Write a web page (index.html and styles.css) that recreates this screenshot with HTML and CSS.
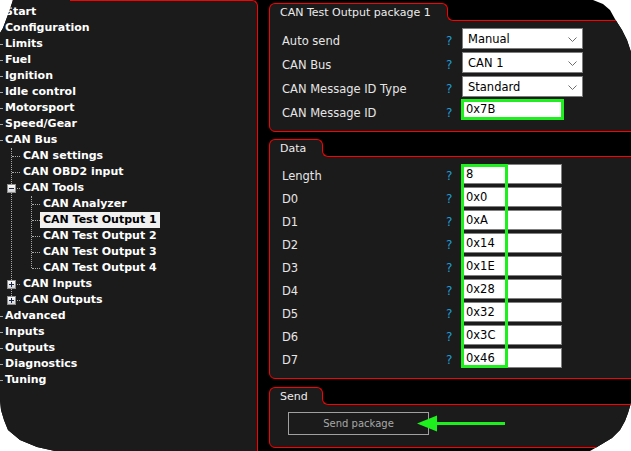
FILE: index.html
```html
<!DOCTYPE html>
<html>
<head>
<meta charset="utf-8">
<link rel="stylesheet" href="styles.css">
</head>
<body>
<div class="screen">
  <nav class="tree">
    <div class="row l0"><span class="t">Start</span></div>
    <div class="row l0"><span class="t">Configuration</span></div>
    <div class="row l0"><span class="t">Limits</span></div>
    <div class="row l0"><span class="t">Fuel</span></div>
    <div class="row l0"><span class="t">Ignition</span></div>
    <div class="row l0"><span class="t">Idle control</span></div>
    <div class="row l0"><span class="t">Motorsport</span></div>
    <div class="row l0"><span class="t">Speed/Gear</span></div>
    <div class="row l0"><span class="t">CAN Bus</span></div>
    <div class="sub s1">
      <div class="row l1"><span class="t">CAN settings</span></div>
      <div class="row l1"><span class="t">CAN OBD2 input</span></div>
      <div class="row l1"><span class="exp minus"></span><span class="t">CAN Tools</span></div>
      <div class="sub s2">
        <div class="row l2"><span class="t">CAN Analyzer</span></div>
        <div class="row l2"><span class="t sel">CAN Test Output 1</span></div>
        <div class="row l2"><span class="t">CAN Test Output 2</span></div>
        <div class="row l2"><span class="t">CAN Test Output 3</span></div>
        <div class="row l2"><span class="t">CAN Test Output 4</span></div>
      </div>
      <div class="row l1"><span class="exp plus"></span><span class="t">CAN Inputs</span></div>
      <div class="row l1"><span class="exp plus"></span><span class="t">CAN Outputs</span></div>
    </div>
    <div class="row l0"><span class="t">Advanced</span></div>
    <div class="row l0"><span class="t">Inputs</span></div>
    <div class="row l0"><span class="t">Outputs</span></div>
    <div class="row l0"><span class="t">Diagnostics</span></div>
    <div class="row l0"><span class="t">Tuning</span></div>
  </nav>

  <main class="content">
    <section class="group g1">
      <div class="tab tab-wide">CAN Test Output package 1</div>
      <div class="panel panel1">
        <div class="field"><span class="lbl">Auto send</span><span class="q">?</span>
          <div class="select"><span>Manual</span><svg class="chev" width="9" height="5" viewBox="0 0 9 5"><polyline points="0.5,0.5 4.5,4.5 8.5,0.5" fill="none" stroke="#6e6e6e" stroke-width="1"/></svg></div></div>
        <div class="field"><span class="lbl">CAN Bus</span><span class="q">?</span>
          <div class="select"><span>CAN 1</span><svg class="chev" width="9" height="5" viewBox="0 0 9 5"><polyline points="0.5,0.5 4.5,4.5 8.5,0.5" fill="none" stroke="#6e6e6e" stroke-width="1"/></svg></div></div>
        <div class="field"><span class="lbl">CAN Message ID Type</span><span class="q">?</span>
          <div class="select"><span>Standard</span><svg class="chev" width="9" height="5" viewBox="0 0 9 5"><polyline points="0.5,0.5 4.5,4.5 8.5,0.5" fill="none" stroke="#6e6e6e" stroke-width="1"/></svg></div></div>
        <div class="field"><span class="lbl">CAN Message ID</span><span class="q">?</span>
          <div class="inp hl">0x7B</div></div>
      </div>
    </section>

    <section class="group g2">
      <div class="tab tab-narrow">Data</div>
      <div class="panel panel2">
        <div class="field df"><span class="lbl">Length</span><span class="q">?</span><div class="inp">8</div></div>
        <div class="field df"><span class="lbl">D0</span><span class="q">?</span><div class="inp">0x0</div></div>
        <div class="field df"><span class="lbl">D1</span><span class="q">?</span><div class="inp">0xA</div></div>
        <div class="field df"><span class="lbl">D2</span><span class="q">?</span><div class="inp">0x14</div></div>
        <div class="field df"><span class="lbl">D3</span><span class="q">?</span><div class="inp">0x1E</div></div>
        <div class="field df"><span class="lbl">D4</span><span class="q">?</span><div class="inp">0x28</div></div>
        <div class="field df"><span class="lbl">D5</span><span class="q">?</span><div class="inp">0x32</div></div>
        <div class="field df"><span class="lbl">D6</span><span class="q">?</span><div class="inp">0x3C</div></div>
        <div class="field df"><span class="lbl">D7</span><span class="q">?</span><div class="inp">0x46</div></div>
        <div class="mark"></div>
      </div>
    </section>

    <section class="group g3">
      <div class="tab tab-narrow">Send</div>
      <div class="panel panel3">
        <button class="btn">Send package</button>
        <svg class="arrow" width="92" height="18" viewBox="0 0 92 18">
          <polygon points="1,8.5 21,0.5 21,16.5" fill="#1ef01e"/>
          <rect x="20" y="7" width="69" height="3" fill="#1ef01e"/>
        </svg>
      </div>
    </section>
  </main>
</div>
</body>
</html>
```

FILE: styles.css
```css
html, body {
  margin: 0;
  padding: 0;
  background: #fff;
}

.screen {
  width: 631px;
  height: 451px;
  overflow: hidden;
  background: #000;
  display: flex;
  align-items: flex-start;
  font-family: "DejaVu Sans", Verdana, sans-serif;
  clip-path: polygon(
    13px 0, 593px 0, 603px 4px, 610px 10px, 615px 19px, 622px 30px, 627px 40px, 631px 52px,
    631px 403px, 628px 413px, 625px 421px, 620px 430px, 612px 438px, 597px 447px, 590px 451px,
    55px 451px, 37px 447px, 20px 440px, 8px 430px, 4px 420px, 1px 410px, 0 400px,
    0 33px, 3px 28px, 6px 20px, 9px 12px
  );
}

/* ---------- tree ---------- */
.tree {
  position: relative;
  flex: none;
  width: 258px;
  height: 480px;
  box-sizing: border-box;
  background: #1b1b1b;
  border-top: 1px solid #ff0000;
  border-right: 1px solid #ff0000;
  border-top-right-radius: 6px;
  padding-top: 3px;
  color: #fff;
  font-weight: bold;
  font-size: 11px;
}

/* the red top edge only shows from x=70 on */
.tree::before {
  content: "";
  position: absolute;
  left: 0;
  top: -1px;
  width: 70px;
  height: 1px;
  background: #1b1b1b;
}

.row {
  height: 16px;
  display: flex;
  align-items: center;
  position: relative;
  white-space: nowrap;
}

.row::before {
  content: "";
  flex: none;
  height: 0;
  border-top: 1px dotted #a8a8a8;
}

.l0::before { width: 2px; }
.l1 { padding-left: 12px; }
.l1::before { width: 8px; }
.l2 { padding-left: 32px; }
.l2::before { width: 8px; }

.t {
  padding: 0 3px;
  line-height: 16px;
}

.t.sel {
  background: #f0f0f0;
  color: #000;
}

.sub { position: relative; }

.sub::before {
  content: "";
  position: absolute;
  top: 0;
  bottom: 8px;
  border-left: 1px dotted #a8a8a8;
}

.s1::before { left: 11px; }
.s2::before { left: 31px; }

.exp {
  position: absolute;
  left: 7px;
  top: 4px;
  width: 9px;
  height: 9px;
  box-sizing: border-box;
  border: 1px solid #8e8e8e;
  background: linear-gradient(#ffffff, #d4d4d4);
  z-index: 1;
}

.exp::before {
  content: "";
  position: absolute;
  left: 1px;
  top: 3px;
  width: 5px;
  height: 1px;
  background: #1c2a4a;
}

.plus::after {
  content: "";
  position: absolute;
  left: 3px;
  top: 1px;
  width: 1px;
  height: 5px;
  background: #1c2a4a;
}

/* ---------- content ---------- */
.content {
  flex: none;
  width: 420px;
  margin-left: 11px;
  padding-top: 3px;
  display: flex;
  flex-direction: column;
  color: #e8e8e8;
}

.group {
  display: flex;
  flex-direction: column;
  align-items: flex-start;
}

.g2 { margin-top: 7px; }
.g3 { margin-top: 8px; }

.tab {
  position: relative;
  z-index: 1;
  height: 18px;
  box-sizing: border-box;
  border: 1px solid #ff0000;
  border-bottom: 0;
  border-radius: 6px 6px 0 0;
  background: #1b1b1b;
  padding: 0 0 0 10px;
  font-size: 11px;
  line-height: 17px;
  color: #ececec;
  margin-bottom: -1px;
  white-space: nowrap;
}

/* concave foot joining the tab to the panel's top line */
.tab::before,
.tab::after {
  content: "";
  position: absolute;
  left: 100%;
  top: 6px;
  bottom: 0;
  width: 7px;
  box-sizing: border-box;
}

.tab::before {
  background: #1b1b1b;
}

.tab::after {
  background: #000;
  border-left: 1px solid #ff0000;
  border-bottom: 1px solid #ff0000;
  border-bottom-left-radius: 6px;
}

.tab-wide { width: 179px; }
.tab-narrow { width: 54px; }

.panel {
  position: relative;
  align-self: stretch;
  box-sizing: border-box;
  border: 1px solid #ff0000;
  border-radius: 0 0 0 6px;
  background: #1b1b1b;
  padding: 7px 0 0 12px;
}

.panel1 { height: 112px; }
.panel2 { height: 223px; }
.panel3 { height: 44px; padding-left: 18px; }

.field {
  display: grid;
  grid-template-columns: 164px 16px auto;
  align-items: center;
  height: 21px;
  margin-bottom: 3px;
}

.field.df {
  height: 20px;
}

.lbl {
  font-size: 11.5px;
  padding-top: 4px;
  color: #e6e6e6;
  white-space: nowrap;
}

.q {
  font-size: 12px;
  padding-top: 4px;
  color: #1f9dd6;
}

.select {
  width: 121px;
  height: 21px;
  box-sizing: border-box;
  border: 1px solid #7c7c7c;
  background: #fff;
  color: #000;
  font-size: 11.5px;
  padding: 0 5px 0 5px;
  display: flex;
  align-items: center;
  justify-content: space-between;
}

.chev { margin-top: 2px; }

.inp {
  width: 100px;
  height: 20px;
  box-sizing: border-box;
  border: 1px solid #7f7f7f;
  background: #fff;
  color: #000;
  font-size: 11.5px;
  padding-left: 3px;
  line-height: 18px;
}

.inp.hl {
  align-self: start;
  width: 103px;
  height: 21px;
  margin: -1px 0 0 -1px;
  border: 3px solid #1ef01e;
  padding-left: 2px;
  line-height: 15px;
}

.mark {
  position: absolute;
  left: 191px;
  top: 7px;
  width: 47px;
  height: 204px;
  box-sizing: border-box;
  border: 3px solid #1ef01e;
}

.btn {
  width: 141px;
  height: 23px;
  box-sizing: border-box;
  border: 1px solid #a0a0a0;
  background: #1b1b1b;
  color: #a8a8a8;
  font-family: "DejaVu Sans", Verdana, sans-serif;
  font-size: 10px;
  padding: 0;
  display: block;
}

.arrow {
  position: absolute;
  left: 146px;
  top: 10px;
}
```
